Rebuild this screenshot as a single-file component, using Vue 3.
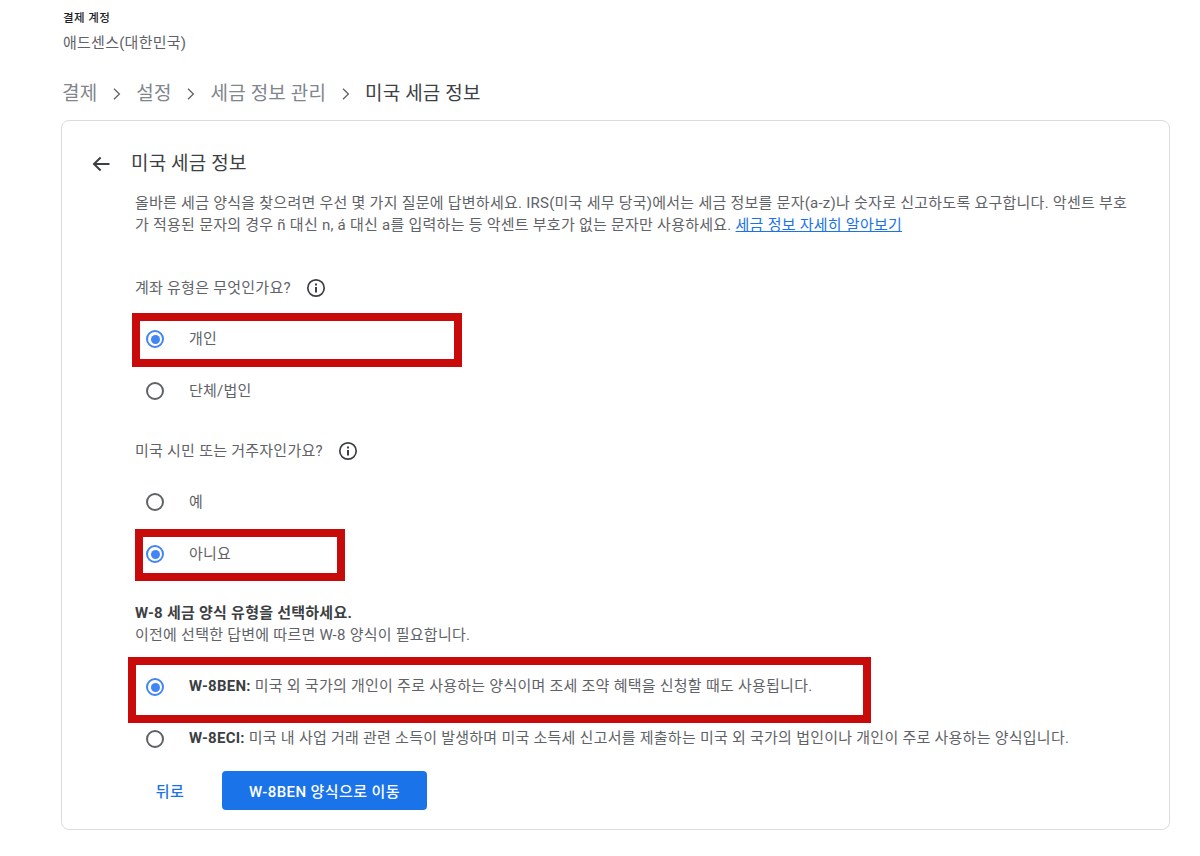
<script setup>
const accountQuestions = [
  {
    id: 'type',
    title: '계좌 유형은 무엇인가요?',
    options: [
      { label: '개인', checked: true, mark: 'mark--person' },
      { label: '단체/법인', checked: false },
    ],
  },
  {
    id: 'resident',
    title: '미국 시민 또는 거주자인가요?',
    options: [
      { label: '예', checked: false },
      { label: '아니요', checked: true, mark: 'mark--no' },
    ],
  },
];

const formOptions = [
  {
    code: 'W-8BEN:',
    text: ' 미국 외 국가의 개인이 주로 사용하는 양식이며 조세 조약 혜택을 신청할 때도 사용됩니다.',
    checked: true,
    mark: 'mark--form',
  },
  {
    code: 'W-8ECI:',
    text: ' 미국 내 사업 거래 관련 소득이 발생하며 미국 소득세 신고서를 제출하는 미국 외 국가의 법인이나 개인이 주로 사용하는 양식입니다.',
    checked: false,
  },
];
</script>

<template>
  <div class="page">
    <div class="account">
      <p class="account__label">결제 계정</p>
      <p class="account__name">애드센스(대한민국)</p>
    </div>

    <nav class="crumbs">
      <span>결제</span>
      <svg class="crumbs__sep" viewBox="0 0 8 12"><path d="M1 .8L6.4 6 1 11.2" /></svg>
      <span>설정</span>
      <svg class="crumbs__sep" viewBox="0 0 8 12"><path d="M1 .8L6.4 6 1 11.2" /></svg>
      <span>세금 정보 관리</span>
      <svg class="crumbs__sep" viewBox="0 0 8 12"><path d="M1 .8L6.4 6 1 11.2" /></svg>
      <span class="crumbs__current">미국 세금 정보</span>
    </nav>

    <section class="card">
      <header class="card__head">
        <svg class="card__back" viewBox="0 0 18 16"><path d="M17.5 8H2.5M8.6 1.5L2 8l6.6 6.5" /></svg>
        <h1 class="card__title">미국 세금 정보</h1>
      </header>

      <div class="card__body">
        <p class="intro">
          올바른 세금 양식을 찾으려면 우선 몇 가지 질문에 답변하세요. IRS(미국 세무 당국)에서는 세금 정보를 문자(a-z)나 숫자로 신고하도록 요구합니다. 악센트 부호가 적용된 문자의 경우 ñ 대신 n, á 대신 a를 입력하는 등 악센트 부호가 없는 문자만 사용하세요.
          <a class="intro__link">세금 정보 자세히 알아보기</a>
        </p>

        <div v-for="q in accountQuestions" :key="q.id" class="question">
          <p class="question__title">
            {{ q.title }}
            <svg class="info" viewBox="0 0 20 20">
              <circle cx="10" cy="10" r="8.2" />
              <rect x="9" y="9" width="2" height="5.5" />
              <rect x="9" y="5.5" width="2" height="2" />
            </svg>
          </p>
          <div v-for="opt in q.options" :key="opt.label" class="option">
            <span class="radio" :class="opt.checked ? 'radio--on' : ''"></span>
            <span class="option__label">{{ opt.label }}</span>
            <span v-if="opt.mark" class="mark" :class="opt.mark"></span>
          </div>
        </div>

        <div class="forms">
          <p class="forms__title">W-8 세금 양식 유형을 선택하세요.</p>
          <p class="forms__sub">이전에 선택한 답변에 따르면 W-8 양식이 필요합니다.</p>
          <div v-for="f in formOptions" :key="f.code" class="option option--form">
            <span class="radio" :class="f.checked ? 'radio--on' : ''"></span>
            <span class="option__label"><b>{{ f.code }}</b>{{ f.text }}</span>
            <span v-if="f.mark" class="mark" :class="f.mark"></span>
          </div>
        </div>

        <div class="actions">
          <button class="btn btn--text">뒤로</button>
          <button class="btn btn--primary">W-8BEN 양식으로 이동</button>
        </div>
      </div>
    </section>
  </div>
</template>

<style>
body {
  background: #ffffff;
}
</style>

<style scoped>
.page {
  box-sizing: border-box;
  height: 856px;
  padding: 11px 30px 0 61px;
  font-family: Roboto, "Noto Sans CJK KR", sans-serif;
  color: #3c4043;
  overflow: hidden;
}

p,
h1 {
  margin: 0;
}

.account__label {
  padding-left: 2px;
  font-size: 11.5px;
  line-height: 14px;
  font-weight: 500;
  letter-spacing: 0.4px;
  color: #202124;
}

.account__name {
  margin-top: 7px;
  padding-left: 2px;
  font-size: 15px;
  line-height: 22px;
  letter-spacing: 0.25px;
  color: #5f6368;
}

.crumbs {
  display: flex;
  align-items: center;
  margin-top: 26px;
  padding-left: 1px;
  font-size: 19px;
  line-height: 28px;
  letter-spacing: 0.15px;
  color: #80868b;
}

.crumbs__sep {
  width: 8px;
  height: 12px;
  margin: 0 15.5px;
  fill: none;
  stroke: #5f6368;
  stroke-width: 1.3;
}

.crumbs__current {
  color: #3c4043;
}

.card {
  box-sizing: border-box;
  height: 710px;
  margin-top: 12px;
  border: 1px solid #dadce0;
  border-radius: 8px;
}

.card__head {
  display: flex;
  align-items: center;
  gap: 21px;
  margin-top: 29px;
  padding-left: 30px;
}

.card__back {
  width: 18px;
  height: 16px;
  fill: none;
  stroke: #3c4043;
  stroke-width: 2;
}

.card__title {
  font-size: 19px;
  line-height: 28px;
  font-weight: 400;
  letter-spacing: 0.15px;
  color: #3c4043;
}

.card__body {
  padding: 14px 30px 0 73px;
}

.intro {
  font-size: 15px;
  line-height: 22px;
  letter-spacing: 0.25px;
  color: #5f6368;
}

.intro__link {
  color: #1a73e8;
  text-decoration: underline;
}

.question {
  margin-top: 41px;
}

.question + .question {
  margin-top: 23px;
}

.question__title {
  display: flex;
  align-items: center;
  gap: 15px;
  font-size: 15px;
  line-height: 22px;
  letter-spacing: 0.25px;
  color: #5f6368;
}

.info {
  width: 20px;
  height: 20px;
  fill: #3c4043;
}

.info circle {
  fill: none;
  stroke: #3c4043;
  stroke-width: 1.7;
}

.option {
  position: relative;
  display: flex;
  align-items: center;
  height: 52px;
  font-size: 15px;
  letter-spacing: 0.25px;
  color: #5f6368;
}

.option__label {
  margin-bottom: 4px;
}

.question__title + .option {
  margin-top: 14px;
}

.radio {
  box-sizing: border-box;
  position: relative;
  flex: none;
  width: 18px;
  height: 18px;
  margin: 0 25px 0 11px;
  border: 2px solid #5f6368;
  border-radius: 50%;
}

.radio--on {
  border-color: #4285f4;
}

.radio--on::after {
  content: "";
  position: absolute;
  inset: 2.5px;
  border-radius: 50%;
  background: #4285f4;
}

/* red annotation boxes drawn over the screenshot */
.mark {
  position: absolute;
  box-sizing: border-box;
  border: 8.5px solid #c80a0a;
  pointer-events: none;
}

.mark--person {
  left: -3px;
  top: 0;
  width: 330px;
  height: 54px;
}

.mark--no {
  left: 0;
  top: 1px;
  width: 210px;
  height: 52px;
}

.mark--form {
  left: -7px;
  top: -4px;
  width: 743px;
  height: 66px;
}

.forms {
  margin-top: 22px;
  font-size: 15px;
  line-height: 22px;
  letter-spacing: 0.25px;
}

.forms__title {
  font-weight: 700;
  color: #3c4043;
}

.forms__sub {
  color: #5f6368;
}

.option--form {
  height: 52px;
  white-space: nowrap;
}

.option--form .option__label {
  margin-bottom: 2px;
}

.forms__sub + .option--form {
  margin-top: 15px;
}

.option b {
  font-weight: 700;
  color: #3c4043;
}

.actions {
  display: flex;
  align-items: center;
  gap: 17px;
  margin-top: 6px;
}

.btn {
  border: 0;
  border-radius: 4px;
  font-family: inherit;
  font-size: 15px;
  font-weight: 500;
  letter-spacing: 0.4px;
}

.btn--text {
  width: 70px;
  height: 39px;
  padding: 0;
  background: none;
  color: #1a73e8;
}

.btn--primary {
  width: 205px;
  height: 39px;
  background: #1a73e8;
  color: #ffffff;
}
</style>
